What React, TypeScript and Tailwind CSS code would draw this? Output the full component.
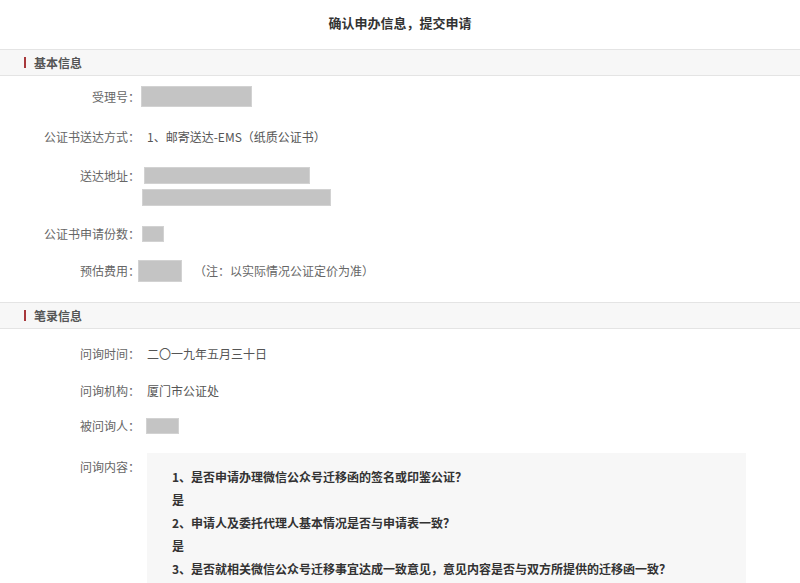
const font = { fontFamily: '"Noto Sans CJK SC", "Noto Sans", sans-serif' }

function SectionBar({ title }: { title: string }) {
  return (
    <div className="flex h-[27px] items-center border-y border-[#e4e4e4] bg-[#f7f7f7]">
      <span className="ml-[24px] h-[11px] w-[2px] bg-[#a8383b]" />
      <span className="ml-[8px] text-[12px] font-bold text-[#555]">{title}</span>
    </div>
  )
}

function Label({ text }: { text: string }) {
  return <div className="w-[140px] shrink-0 text-right text-[12px] text-[#666]">{text}</div>
}

function Mask({ className }: { className: string }) {
  return <div className={`border border-[#d2d2d2] bg-[#c4c4c4] ${className}`} />
}

export default function App() {
  return (
    <div className="h-[583px] w-[800px] overflow-hidden bg-white" style={font}>
      <div className="flex h-[49px] items-center justify-center pb-[3px] text-[13px] font-bold text-[#333]">
        确认申办信息，提交申请
      </div>

      <SectionBar title="基本信息" />
      <div className="pb-[20px]">
        <div className="mt-[10px] flex h-[21px] items-center">
          <Label text="受理号：" />
          <Mask className="ml-[1px] h-[21px] w-[111px]" />
        </div>
        <div className="mt-[20px] flex h-[20px] items-center">
          <Label text="公证书送达方式：" />
          <span className="ml-[7px] text-[12px] text-[#555]">1、邮寄送达-EMS（纸质公证书）</span>
        </div>
        <div className="mt-[20px] flex items-start">
          <div className="flex h-[17px] items-center">
            <Label text="送达地址：" />
          </div>
          <div className="flex flex-col gap-[5px]">
            <Mask className="ml-[4px] h-[17px] w-[166px]" />
            <Mask className="ml-[2px] h-[17px] w-[189px]" />
          </div>
        </div>
        <div className="mt-[20px] flex h-[16px] items-center">
          <Label text="公证书申请份数：" />
          <Mask className="ml-[2px] h-[16px] w-[22px]" />
        </div>
        <div className="mt-[18px] flex h-[22px] items-center">
          <Label text="预估费用：" />
          <Mask className="ml-[-2px] h-[22px] w-[44px]" />
          <span className="ml-[12px] text-[12px] text-[#666]">（注：以实际情况公证定价为准）</span>
        </div>
      </div>

      <SectionBar title="笔录信息" />
      <div>
        <div className="mt-[15px] flex h-[20px] items-center">
          <Label text="问询时间：" />
          <span className="ml-[7px] text-[12px] text-[#555]">二〇一九年五月三十日</span>
        </div>
        <div className="mt-[17px] flex h-[20px] items-center">
          <Label text="问询机构：" />
          <span className="ml-[7px] text-[12px] text-[#555]">厦门市公证处</span>
        </div>
        <div className="mt-[17px] flex h-[16px] items-center">
          <Label text="被问询人：" />
          <Mask className="ml-[6px] h-[16px] w-[33px]" />
        </div>
        <div className="mt-[19px] flex items-start">
          <div className="pt-[4px] leading-[20px]">
            <Label text="问询内容：" />
          </div>
          <div className="ml-[7px] h-[200px] w-[599px] bg-[#f7f7f7] pl-[25px] pt-[12px] text-[12px] font-bold leading-[23px] text-[#333]">
            <p>1、是否申请办理微信公众号迁移函的签名或印鉴公证？</p>
            <p>是</p>
            <p>2、申请人及委托代理人基本情况是否与申请表一致？</p>
            <p>是</p>
            <p>3、是否就相关微信公众号迁移事宜达成一致意见，意见内容是否与双方所提供的迁移函一致？</p>
          </div>
        </div>
      </div>
    </div>
  )
}
